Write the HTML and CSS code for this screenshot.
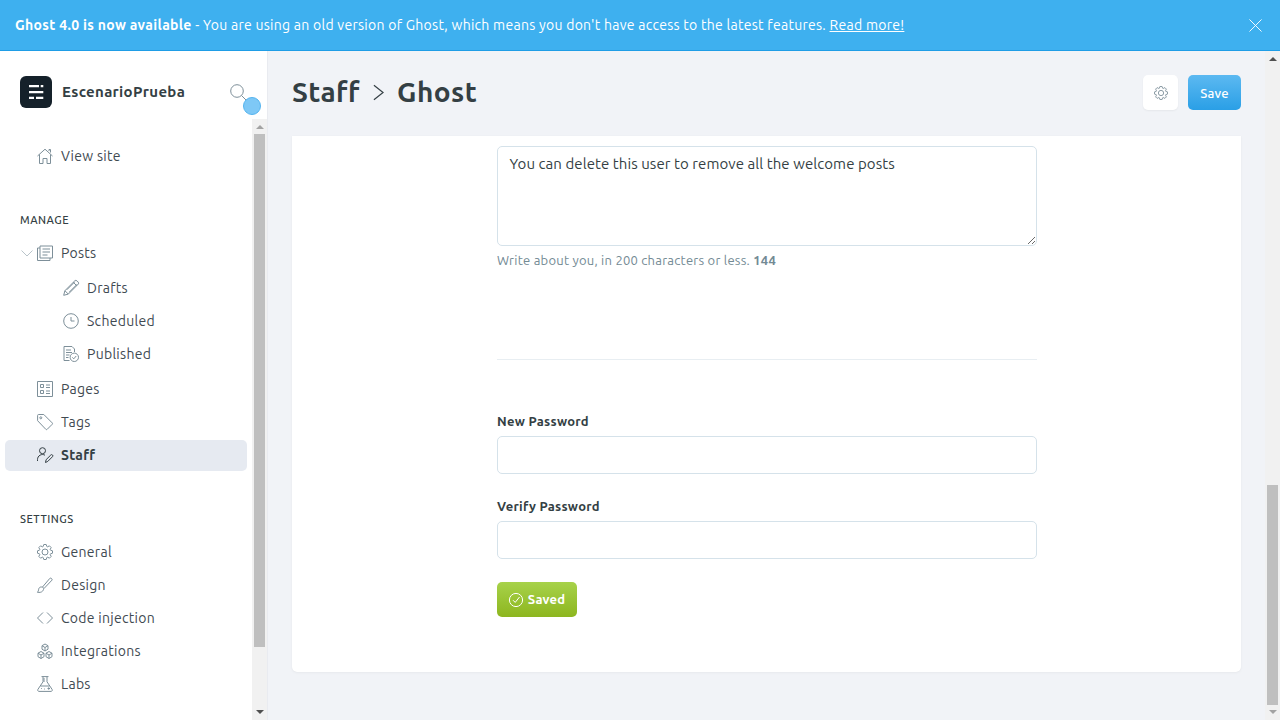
FILE: index.html
```html
<!DOCTYPE html>
<html lang="en">
<head>
<meta charset="utf-8">
<title>Staff - Ghost</title>
<link rel="stylesheet" href="styles.css">
</head>
<body>
<div class="banner">
  <p class="banner-text"><strong>Ghost 4.0 is now available</strong> - You are using an old version of Ghost, which means you don't have access to the latest features. <a href="#">Read more!</a></p>
  <svg class="banner-close" viewBox="0 0 14 14"><path d="M.5.5l13 13M13.5.5l-13 13"/></svg>
</div>
<div class="app">
  <aside class="sidebar">
    <div class="brand">
      <div class="logo">
        <svg viewBox="0 0 32 32"><path d="M9 9h10v2.300H9zM20.700 9h2.600v2.300h-2.600zM9 15h14.300v2.300H9zM9 20.700h5V23H9zM16 20.700h7.300V23H16z"/></svg>
      </div>
      <span class="brand-name">EscenarioPrueba</span>
      <svg class="search" viewBox="0 0 22 22"><circle cx="7" cy="7" r="6.300"/><path d="M11.500 11.500l7 7"/></svg>
      <span class="dot"></span>
    </div>
    <div class="side-scroll">
      <nav class="nav">
        <a class="row top-row"><svg class="ic" viewBox="0 0 16 16"><path d="M.5 8L8 1.200 15.500 8M2.500 6.500v9h3.500v-5h4v5h3.500v-9M12 3V1.500h1.500v3"/></svg>View site</a>
        <h4 class="nav-head">MANAGE</h4>
        <a class="row"><svg class="chev" viewBox="0 0 12 7"><path d="M.5.500L6 6l5.500-5.500"/></svg><svg class="ic" viewBox="0 0 16 16"><path d="M3 1h12.500v12H3zM3 3H.5v12.500H13V13M5.500 4h7.500M5.500 7h7.500M5.500 10h5"/></svg>Posts</a>
        <div class="sub">
          <a class="row sub-row"><svg class="ic" viewBox="0 0 16 16"><path d="M.7 15.300l1.200-4.600L11.800.8a1.500 1.500 0 0 1 2.100 0l1.300 1.300a1.500 1.500 0 0 1 0 2.100L5.300 14.100zM1.900 10.700l3.400 3.400M10.300 2.300l3.400 3.400M3.800 9.800l8-8M6.200 12.200l8-8"/></svg>Drafts</a>
          <a class="row sub-row"><svg class="ic" viewBox="0 0 16 16"><circle cx="8" cy="8" r="7.300"/><path d="M8 4v4h3.500"/></svg>Scheduled</a>
          <a class="row sub-row"><svg class="ic" viewBox="0 0 16 16"><path d="M6.500 14.500H1V.5h8l2.500 2.500v3M3 4h5M3 6.500h6M3 9h3.500M3 11.500h2.500"/><circle cx="11.300" cy="11.300" r="4.200"/><path d="M9.300 11.400l1.500 1.400 2.400-2.800"/></svg>Published</a>
        </div>
        <a class="row"><svg class="ic" viewBox="0 0 16 16"><path d="M.5.500h15v15H.5zM3.500 3.500h3v3h-3zM3.500 9.500h3v3h-3zM9 4h4M9 6.500h4M9 10h4M9 12.500h4"/></svg>Pages</a>
        <a class="row"><svg class="ic" viewBox="0 0 16 16"><path d="M.6 1.500a1 1 0 0 1 1-1h5.200l8.400 8.400a1 1 0 0 1 0 1.400l-5 5a1 1 0 0 1-1.400 0L.6 6.700z"/><circle cx="3.800" cy="3.800" r="1"/></svg>Tags</a>
        <a class="row active"><svg class="ic ic-dark" viewBox="0 0 16 16"><circle cx="5.500" cy="3.700" r="3"/><path d="M.5 14v-1.500A5 5 0 0 1 8 8.200M8.500 15.500l.6-2.800 4.700-4.700a1.200 1.200 0 0 1 1.700 1.700l-4.700 4.700z"/></svg>Staff</a>
        <h4 class="nav-head nav-head-settings">SETTINGS</h4>
        <a class="row"><svg class="ic gear" viewBox="0 0 16 16"><circle cx="8" cy="8" r="3"/><path d="M6.800.5H9.200L9.900 2.600L10.470 2.840L12.450 1.850L14.150 3.550L13.160 5.530L13.400 6.100L15.500 6.800V9.200L13.400 9.900L13.160 10.470L14.150 12.450L12.450 14.150L10.470 13.160L9.900 13.400L9.200 15.500H6.800L6.100 13.400L5.530 13.160L3.550 14.150L1.850 12.450L2.840 10.470L2.600 9.900L.5 9.200V6.800L2.600 6.100L2.840 5.530L1.850 3.550L3.550 1.850L5.530 2.840L6.100 2.600Z"/></svg>General</a>
        <a class="row"><svg class="ic" viewBox="0 0 16 16"><path d="M5.500 10L12.800 1.400c.9-1 2.900.6 2.200 1.700L7 11.500M4.800 10c-1.500-.3-2.900.6-3.100 2.200-.1 1.200-.5 2.300-1.200 3.200 1.700.2 4 0 5.100-1.300.9-1 1.100-2.300 1-2.900L5.500 10z"/></svg>Design</a>
        <a class="row"><svg class="ic" viewBox="0 0 16 16"><path d="M6 2.500L.5 8 6 13.500M10 2.500L15.500 8 10 13.500"/></svg>Code injection</a>
        <a class="row"><svg class="ic" viewBox="0 0 16 16"><path d="M8 1l3 1.700v3.500L8 8 5 6.200V2.700zM4 8.500l3 1.700v3.500l-3 1.800-3-1.800v-3.500zM12 8.500l3 1.700v3.500l-3 1.800-3-1.800v-3.500zM5 2.700L8 4.500l3-1.800M8 4.500V8M1 10.200L4 12l3-1.800M4 12v3.500M9 10.200l3 1.800 3-1.800M12 12v3.500"/></svg>Integrations</a>
        <a class="row"><svg class="ic" viewBox="0 0 16 16"><path d="M4.500.6h7M6 .6v5.200L.9 13.400a1.300 1.300 0 0 0 1.100 2h12a1.300 1.300 0 0 0 1.100-2L10 5.800V.6M6 3h2M6 5h2M3.500 10h9M10.500 12.500h2.500M11.700 11.300v2.400M4 12.500h.8M7 13h.8"/></svg>Labs</a>
      </nav>
      <div class="bar bar-side">
        <span class="arrow up"></span>
        <span class="thumb thumb-side"></span>
        <span class="arrow down"></span>
      </div>
    </div>
  </aside>
  <main class="main">
    <div class="content">
      <header class="head">
        <h1 class="title">Staff<svg class="crumb" viewBox="0 0 12 18"><path d="M1 1l10 8-10 8"/></svg>Ghost</h1>
        <button class="btn-gear"><svg class="gear" viewBox="0 0 16 16"><circle cx="8" cy="8" r="3"/><path d="M6.800.5H9.200L9.900 2.600L10.470 2.840L12.450 1.850L14.150 3.550L13.160 5.530L13.400 6.100L15.500 6.800V9.200L13.400 9.900L13.160 10.470L14.150 12.450L12.450 14.150L10.470 13.160L9.900 13.400L9.200 15.500H6.800L6.100 13.400L5.530 13.160L3.550 14.150L1.850 12.450L2.840 10.470L2.600 9.900L.5 9.200V6.800L2.600 6.100L2.840 5.530L1.850 3.550L3.550 1.850L5.530 2.840L6.100 2.600Z"/></svg></button>
        <button class="btn-save">Save</button>
      </header>
      <section class="card">
        <form class="form">
          <div class="textarea">You can delete this user to remove all the welcome posts<svg class="grip" viewBox="0 0 8 8"><path d="M1 8l7-7M5 8l3-3"/></svg></div>
          <p class="hint">Write about you, in 200 characters or less. <b>144</b></p>
          <hr class="divider">
          <label class="label">New Password</label>
          <div class="input"></div>
          <label class="label label-2">Verify Password</label>
          <div class="input"></div>
          <button class="btn-saved"><svg viewBox="0 0 16 16"><circle cx="8" cy="8" r="6.600"/><path d="M5 8.200l2.200 2.200L11.500 5"/></svg><span class="saved-text">Saved</span></button>
        </form>
      </section>
    </div>
    <div class="bar bar-main">
      <span class="arrow up dark"></span>
      <span class="thumb thumb-main"></span>
      <span class="arrow down"></span>
    </div>
  </main>
</div>
</body>
</html>
```
FILE: styles.css
```css
* { box-sizing: border-box; }
html, body { margin: 0; height: 100%; overflow: hidden; }
body { font-family: "Ubuntu", "Noto Sans", sans-serif; color: #3f4a52; background: #f1f3f7; display: flex; flex-direction: column; height: 720px; }
a { color: inherit; text-decoration: none; }

.banner { height: 51px; flex: none; background: #3eb0ef; border-bottom: 1px solid #1f9de6; display: flex; align-items: center; justify-content: space-between; padding: 0 18px 0 15px; color: #fff; font-size: 14px; letter-spacing: .27px; }
.banner-text { margin: 0; }
.banner-text strong { letter-spacing: .32px; }
.banner-text a { text-decoration: underline; }
.banner-close { width: 13px; height: 13px; fill: none; stroke: #fff; stroke-width: 1; }

.app { flex: 1; display: flex; min-height: 0; }
.sidebar { width: 268px; flex: none; background: #fff; border-right: 1px solid #e9ebf0; display: flex; flex-direction: column; }
.brand { height: 68px; flex: none; display: flex; align-items: center; padding: 14px 0 0 20px; position: relative; }
.logo { width: 32px; height: 32px; background: #15212a; border-radius: 6px; }
.logo svg { display: block; width: 32px; height: 32px; fill: #fff; }
.brand-name { margin: 0 0 2px 10px; font-weight: 700; font-size: 15px; letter-spacing: .33px; color: #343f44; }
.search { position: absolute; left: 230px; top: 33px; width: 22px; height: 22px; fill: none; stroke: #7d8f99; stroke-width: 1; }
.dot { position: absolute; left: 243px; top: 46px; width: 18px; height: 18px; border-radius: 50%; background: #7ec8f6; border: 1px solid #55b4ef; }

.side-scroll { flex: 1; min-height: 0; display: flex; }
.nav { flex: 1; min-width: 0; padding: 21px 5px 0 5px; }
.row { display: flex; align-items: center; height: 31px; margin-bottom: 2px; padding-left: 32px; font-size: 14px; letter-spacing: .28px; position: relative; color: #3f4a52; }
.ic { width: 16px; height: 16px; flex: none; margin-right: 8px; fill: none; stroke: #7d8f99; stroke-width: 1; overflow: visible; }
.ic-dark { stroke: #343f44; }
.gear { stroke-linejoin: round; }
.chev { position: absolute; left: 16px; top: 13px; width: 12px; height: 7px; fill: none; stroke: #b9c4ca; stroke-width: 1; }
.top-row { margin-bottom: 0; }
.nav-head { margin: 41px 0 0 15px; height: 25px; font-size: 11px; font-weight: 500; line-height: 16px; letter-spacing: .5px; color: #343f44; }
.nav-head-settings { margin-top: 40px; height: 25px; }
.sub { padding: 2px 0; }
.sub-row { padding-left: 58px; }
.active { background: #e6eaf1; border-radius: 5px; font-weight: 700; color: #343f44; margin: 3px 0 1px; padding-bottom: 2px; }

.bar { width: 15px; flex: none; background: #f1f1f1; display: flex; flex-direction: column; align-items: center; position: relative; }
.arrow { width: 0; height: 0; border-left: 4px solid transparent; border-right: 4px solid transparent; position: absolute; }
.arrow.up { top: 6px; border-bottom: 4px solid #a3a3a3; }
.arrow.dark { border-bottom-color: #505050; }
.arrow.down { bottom: 6px; border-top: 4px solid #505050; }
.bar-main .arrow.down { border-top-color: #a3a3a3; }
.thumb { position: absolute; left: 2px; right: 0; background: #bfbfbf; }
.thumb-side { top: 15px; height: 513px; width: 11px; left: 2px; }
.thumb-main { top: 434px; height: 220px; width: 11px; }

.main { flex: 1; min-width: 0; display: flex; }
.content { flex: 1; min-width: 0; padding: 0 24px 0 24px; }
.head { height: 85px; display: flex; align-items: center; padding-bottom: 2px; }
.title { flex: 1; margin: 0 0 3px; font-size: 28px; font-weight: 700; letter-spacing: .45px; color: #343f44; display: flex; align-items: center; }
.crumb { width: 11px; height: 17px; margin: 2px 13px 0 13px; fill: none; stroke: #343f44; stroke-width: 1.300; }
.btn-gear { width: 35px; height: 35px; padding: 0; border: 0; border-radius: 5px; background: #fff; box-shadow: 0 1px 2px rgba(0,0,0,.05); display: flex; align-items: center; justify-content: center; margin-right: 10px; }
.btn-gear svg { width: 14px; height: 14px; fill: none; stroke: #7d8f99; stroke-width: 1; }
.btn-save { width: 53px; height: 35px; padding: 0; border: 0; border-radius: 5px; background: linear-gradient(#5cb9f1, #2a9fe6); color: #fff; font: 500 13px "Ubuntu", "Noto Sans", sans-serif; letter-spacing: .2px; }

.card { background: #fff; height: 536px; border-radius: 0 0 5px 5px; box-shadow: 0 0 1px rgba(0,0,0,.07), 0 1px 3px rgba(0,0,0,.04); padding: 10px 0 0 205px; }
.form { width: 540px; display: flex; flex-direction: column; align-items: flex-start; }
.textarea { width: 540px; height: 100px; border: 1px solid #d5e2ea; border-radius: 5px; padding: 7px 12px 7px 11.5px; font-size: 15px; letter-spacing: .07px; line-height: 20px; color: #343f44; position: relative; }
.grip { position: absolute; right: 1px; bottom: 1px; width: 8px; height: 8px; fill: none; stroke: #6b6b6b; stroke-width: 1; }
.hint { margin: 6px 0 0; font-size: 13px; letter-spacing: .24px; line-height: 16px; color: #738a94; }
.hint b { font-weight: 700; }
.divider { width: 540px; height: 1px; margin: 91px 0 0; border: 0; background: #e8eef2; }
.label { margin-top: 52px; font-size: 13px; letter-spacing: .27px; line-height: 18px; font-weight: 700; color: #343f44; height: 24px; }
.label-2 { margin-top: 23px; height: 24px; }
.input { width: 540px; height: 38px; border: 1px solid #d5e2ea; border-radius: 5px; }
.btn-saved { margin-top: 23px; width: 80px; height: 35px; padding: 0; border: 0; border-radius: 5px; background: linear-gradient(#a7d24a, #8db61f); color: #fff; font: 700 13px "Ubuntu", "Noto Sans", sans-serif; letter-spacing: .2px; display: flex; align-items: center; justify-content: center; }
.btn-saved svg { width: 16px; height: 16px; margin-right: 4px; margin-left: -1px; fill: none; stroke: #fff; stroke-width: 1; }
.saved-text { margin-bottom: 2px; }
```
